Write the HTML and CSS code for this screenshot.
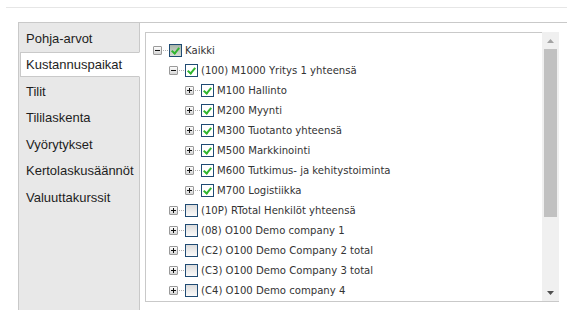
FILE: index.html
```html
<!DOCTYPE html>
<html lang="fi">
<head>
<meta charset="utf-8">
<title>Kustannuspaikat</title>
<link rel="stylesheet" href="styles.css">
</head>
<body>
<div class="topline"></div>
<div class="main">
  <nav class="tabs">
    <div class="tab">Pohja-arvot</div>
    <div class="tab active">Kustannuspaikat</div>
    <div class="tab">Tilit</div>
    <div class="tab">Tililaskenta</div>
    <div class="tab">Vyörytykset</div>
    <div class="tab">Kertolaskusäännöt</div>
    <div class="tab">Valuuttakurssit</div>
  </nav>
  <section class="content">
    <div class="treebox">
      <div class="tree">
        <div class="row l1"><span class="exp minus"></span><span class="dots"></span><span class="cb checked focus"></span><span class="label">Kaikki</span></div>
        <div class="row l2"><span class="exp minus"></span><span class="dots"></span><span class="cb checked"></span><span class="label">(100) M1000 Yritys 1 yhteensä</span></div>
        <div class="row l3"><span class="exp plus"></span><span class="dots"></span><span class="cb checked"></span><span class="label">M100 Hallinto</span></div>
        <div class="row l3"><span class="exp plus"></span><span class="dots"></span><span class="cb checked"></span><span class="label">M200 Myynti</span></div>
        <div class="row l3"><span class="exp plus"></span><span class="dots"></span><span class="cb checked"></span><span class="label">M300 Tuotanto yhteensä</span></div>
        <div class="row l3"><span class="exp plus"></span><span class="dots"></span><span class="cb checked"></span><span class="label">M500 Markkinointi</span></div>
        <div class="row l3"><span class="exp plus"></span><span class="dots"></span><span class="cb checked"></span><span class="label">M600 Tutkimus- ja kehitystoiminta</span></div>
        <div class="row l3"><span class="exp plus"></span><span class="dots"></span><span class="cb checked"></span><span class="label">M700 Logistiikka</span></div>
        <div class="row l2"><span class="exp plus"></span><span class="dots"></span><span class="cb"></span><span class="label">(10P) RTotal Henkilöt yhteensä</span></div>
        <div class="row l2"><span class="exp plus"></span><span class="dots"></span><span class="cb"></span><span class="label">(08) O100 Demo company 1</span></div>
        <div class="row l2"><span class="exp plus"></span><span class="dots"></span><span class="cb"></span><span class="label">(C2) O100 Demo Company 2 total</span></div>
        <div class="row l2"><span class="exp plus"></span><span class="dots"></span><span class="cb"></span><span class="label">(C3) O100 Demo Company 3 total</span></div>
        <div class="row l2"><span class="exp plus"></span><span class="dots"></span><span class="cb"></span><span class="label">(C4) O100 Demo company 4</span></div>
      </div>
      <div class="scrollbar">
        <div class="sb-btn"><svg width="7" height="4" viewBox="0 0 7 4"><path d="M0 4 L3.5 0 L7 4 Z" fill="#a3a3a3"/></svg></div>
        <div class="track"><div class="thumb"></div></div>
        <div class="sb-btn"><svg width="7" height="4" viewBox="0 0 7 4"><path d="M0 0 L7 0 L3.5 4 Z" fill="#505050"/></svg></div>
      </div>
    </div>
  </section>
</div>
</body>
</html>
```

FILE: styles.css
```css
html, body {
  margin: 0;
  padding: 0;
  background: #fff;
}
body {
  width: 567px;
  height: 310px;
  overflow: hidden;
  font-family: "Liberation Sans", Arial, sans-serif;
}
.topline {
  height: 1px;
  background: #e6e6e6;
  margin: 7px 0 0 6px;
}
.main {
  display: flex;
  margin: 14px 0 0 18px;
  border-top: 1px solid #c9c9c9;
  height: 288px;
}
.tabs {
  width: 120px;
  flex: none;
  background: #e8e8e8;
  border-left: 1px solid #c9c9c9;
  border-right: 1px solid #c9c9c9;
  padding-top: 2.5px;
  box-sizing: content-box;
}
.tab {
  height: 25px;
  box-sizing: border-box;
  border: 1px solid transparent;
  margin: 0 0 1.5px 1px;
  padding-left: 5px;
  line-height: 23px;
  font-size: 13px;
  color: #1e1e1e;
  white-space: nowrap;
}
.tab.active {
  background: #fff;
  border-color: #c9c9c9;
  border-right-color: #fff;
  margin-right: -1px;
  position: relative;
}
.content {
  flex: 1;
  padding: 9px 8px 0 5px;
  min-width: 0;
}
.treebox {
  display: flex;
  height: 270px;
  box-sizing: border-box;
  border-left: 1px solid #c9c9c9;
  border-bottom: 1px solid #c9c9c9;
}
.tree {
  flex: 1;
  min-width: 0;
  border-top: 1px solid #c9c9c9;
  padding: 7px 0 0 7px;
  overflow: hidden;
  font-family: "DejaVu Sans", Verdana, sans-serif;
  font-size: 10.1px;
  color: #333;
}
.row {
  height: 20px;
  display: flex;
  align-items: center;
  white-space: nowrap;
}
.row.l2 { padding-left: 16px; }
.row.l3 { padding-left: 32px; }
.exp {
  width: 9px;
  height: 9px;
  box-sizing: border-box;
  border: 1px solid #9a9a9a;
  border-radius: 1px;
  background: linear-gradient(#fdfdfd, #d6d6d6);
  position: relative;
  flex: none;
}
.exp::before {
  content: "";
  position: absolute;
  left: 1px;
  top: 3px;
  width: 5px;
  height: 1px;
  background: #111;
}
.exp.plus::after {
  content: "";
  position: absolute;
  left: 3px;
  top: 1px;
  width: 1px;
  height: 5px;
  background: #111;
}
.dots {
  width: 5px;
  height: 1px;
  margin: 0 1px 0 1px;
  background: repeating-linear-gradient(90deg, #b0b0b0 0 1px, transparent 1px 2px);
  flex: none;
}
.cb {
  width: 13px;
  height: 13px;
  box-sizing: border-box;
  border: 1px solid #1f4b73;
  background: linear-gradient(#dcdcdc, #fafafa);
  flex: none;
  position: relative;
}
.cb.checked {
  background: #fff;
}
.cb.focus {
  background: linear-gradient(#a9b6a9, #d5dcd5);
}
.cb.checked::after {
  content: "";
  position: absolute;
  left: 3px;
  top: 1px;
  width: 3px;
  height: 6px;
  border: solid #2fb52f;
  border-width: 0 2px 2px 0;
  transform: rotate(40deg);
}
.label {
  margin-left: 3px;
}
.scrollbar {
  width: 17px;
  flex: none;
  background: #f0f0f0;
  display: flex;
  flex-direction: column;
}
.sb-btn {
  height: 17px;
  display: flex;
  align-items: center;
  justify-content: center;
  flex: none;
}
.track {
  flex: 1;
  padding: 0 2px;
}
.thumb {
  height: 168px;
  background: #c1c1c1;
}
```
